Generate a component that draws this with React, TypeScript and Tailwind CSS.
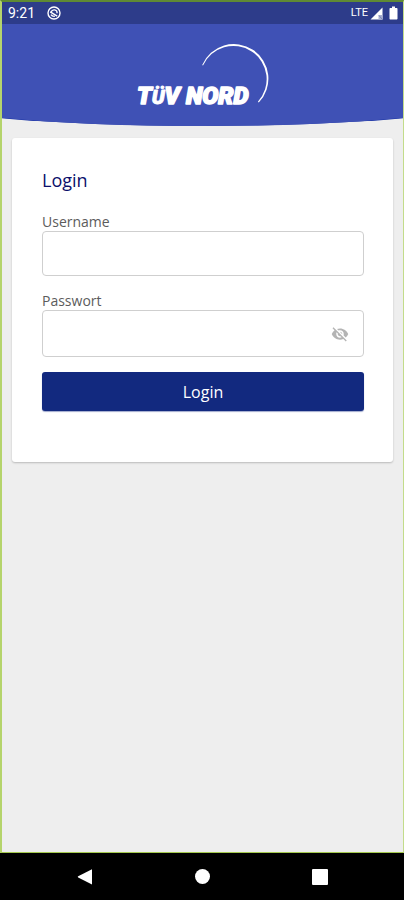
import React, { useState } from 'react';

function DoNotDisturbIcon() {
  return (
    <svg viewBox="0 0 14 14" className="h-[14px] w-[14px]" fill="none" stroke="currentColor" aria-hidden="true">
      <circle cx="7" cy="7" r="6" strokeWidth="1.4" />
      <path d="M4 6.200C4.600 4.500 6 3.700 7.600 3.900 9.200 4.100 10.200 5.500 10.100 7.200" strokeWidth="1.300" />
      <path d="M3.200 5.800L10.200 10.200M4 8.600C4.900 10 6.300 10.500 7.800 10.300" strokeWidth="1.400" />
    </svg>
  );
}

function SignalIcon() {
  return (
    <svg viewBox="0 0 13 13" className="h-[13px] w-[13px]" aria-hidden="true">
      <path d="M12.500.5v12H.5z" fill="#ffffff" />
      <path d="M8.500 8h4v4.500h-4z" fill="#a9b0d0" />
      <path d="M9 8.500l3 3.500" stroke="#7882b5" strokeWidth="1" />
    </svg>
  );
}

function BatteryIcon() {
  return (
    <svg viewBox="0 0 9 14" className="h-[14px] w-[9px]" fill="currentColor" aria-hidden="true">
      <path d="M3 .5h3v1.500h1.500c.6 0 1 .4 1 1v9.500c0 .6-.4 1-1 1h-6c-.6 0-1-.4-1-1V3c0-.6.4-1 1-1H3z" />
    </svg>
  );
}

function Logo() {
  return (
    <svg viewBox="0 0 134 74" className="h-[74px] w-[134px] overflow-visible" role="img" aria-label="TÜV NORD">
      {/* swoosh, thickest towards the upper right */}
      <path
        d="M66.200 21A34.500 34.500 0 1 1 122.800 58.500L121.900 57.700A33.300 33.300 0 1 0 67 21.500Z"
        fill="#ffffff"
      />
      <text
        x="1"
        y="60"
        fill="#ffffff"
        stroke="#ffffff"
        strokeWidth="1.6"
        strokeLinejoin="round"
        className="font-['Roboto'] text-[24px] font-black italic"
      >
        T<tspan className="text-[20px]" strokeWidth="0.9">Ü</tspan>V NORD
      </text>
    </svg>
  );
}

function EyeOffIcon() {
  return (
    <svg viewBox="0 0 24 24" className="h-[18px] w-[18px]" fill="currentColor" aria-hidden="true">
      <path d="M12 7c2.760 0 5 2.240 5 5 0 .65-.13 1.260-.36 1.830l2.920 2.920c1.510-1.260 2.700-2.890 3.430-4.750-1.730-4.390-6-7.500-11-7.500-1.400 0-2.740.25-3.980.7l2.160 2.160C10.740 7.130 11.350 7 12 7zM2 4.270l2.280 2.280.46.46C3.080 8.300 1.780 10.020 1 12c1.730 4.390 6 7.500 11 7.500 1.550 0 3.030-.3 4.380-.84l.42.42L19.730 22 21 20.730 3.270 3 2 4.270zM7.530 9.800l1.550 1.550c-.05.21-.08.43-.08.65 0 1.660 1.340 3 3 3 .22 0 .44-.03.65-.08l1.550 1.550c-.67.33-1.410.53-2.200.53-2.760 0-5-2.240-5-5 0-.79.2-1.530.53-2.200zm4.310-.78l3.150 3.150.02-.16c0-1.660-1.340-3-3-3l-.17.01z" />
    </svg>
  );
}

export default function App() {
  const [username, setUsername] = useState('');
  const [password, setPassword] = useState('');
  const [showPassword, setShowPassword] = useState(false);

  return (
    <div className="flex min-h-screen flex-col bg-black font-['Open_Sans',sans-serif]">
      <div className="flex flex-1 flex-col border-b border-l-2 border-r border-t-2 border-b-[#a5c94f] border-l-[#b5d46c] border-r-[#c3dc8a] border-t-[#5f8a34] bg-[#eeeeee]">
        {/* Status bar */}
        <div className="flex h-[22px] items-center bg-[#2d3c8a] pl-1.5 pr-[5px] font-['Roboto'] text-white">
          <span className="text-[14px] leading-5">9:21</span>
          <span className="ml-3">
            <DoNotDisturbIcon />
          </span>
          <div className="ml-auto flex items-center">
            <span className="text-[11px] leading-5">LTE</span>
            <span className="ml-0.5">
              <SignalIcon />
            </span>
            <span className="ml-1.5">
              <BatteryIcon />
            </span>
          </div>
        </div>

        {/* Curved header */}
        <header className="relative flex h-[102px] justify-center overflow-hidden pt-5">
          <div className="absolute inset-y-0 -left-[20%] w-[140%] rounded-b-[50%_26px] bg-[#1a34a5]" />
          <div className="absolute inset-y-0 -left-[20%] w-[140%] rounded-b-[50%_27px] bg-[#3f51b5]" />
          <div className="relative">
            <Logo />
          </div>
        </header>

        <main className="px-2.5 pt-3">
          <form
            className="rounded-[3px] bg-white pb-[51px] pl-[30px] pr-[29px] pt-[30px] shadow-[0_1px_2px_rgba(0,0,0,0.22)]"
            onSubmit={(e) => e.preventDefault()}
          >
            <h1 className="text-[18px] leading-6 text-[#0b0f6b]">Login</h1>

            <label htmlFor="username" className="mt-5 block text-[14px] leading-[19px] text-[#5c5c5c]">
              Username
            </label>
            <input
              id="username"
              type="text"
              value={username}
              onChange={(e) => setUsername(e.target.value)}
              className="block h-[45px] w-full rounded-[4px] border border-[#cfcfcf] bg-white px-3 text-[16px] outline-none"
            />

            <label htmlFor="password" className="mt-[15px] block text-[14px] leading-[19px] text-[#5c5c5c]">
              Passwort
            </label>
            <div className="flex h-[47px] items-center rounded-[4px] border border-[#cfcfcf] bg-white pr-3.5">
              <input
                id="password"
                type={showPassword ? 'text' : 'password'}
                value={password}
                onChange={(e) => setPassword(e.target.value)}
                className="h-full min-w-0 flex-1 px-3 text-[16px] outline-none"
              />
              <button
                type="button"
                aria-label="Passwort anzeigen"
                onClick={() => setShowPassword(!showPassword)}
                className="text-[#b4b4b4]"
              >
                <EyeOffIcon />
              </button>
            </div>

            <button
              type="submit"
              className="mt-[15px] block h-[39px] w-full rounded-[3px] bg-[#12297f] text-center text-[16px] text-white shadow-[0_1px_1px_rgba(18,41,127,0.4)]"
            >
              Login
            </button>
          </form>
        </main>
      </div>

      {/* Android navigation bar */}
      <nav className="grid h-[47px] grid-cols-[1fr_auto_1fr] items-center bg-black text-white">
        <button type="button" aria-label="Back" className="mr-[102px] justify-self-end">
          <svg viewBox="0 0 16 18" className="h-[18px] w-[16px]" fill="currentColor" aria-hidden="true">
            <path d="M15 1.200v15.200L1.200 9.400a.7.7 0 0 1 0-1.200z" />
          </svg>
        </button>
        <button type="button" aria-label="Home" className="block h-[15px] w-[15px] rounded-full bg-white" />
        <button type="button" aria-label="Recent apps" className="ml-[102px] block h-4 w-4 rounded-[1px] bg-white" />
      </nav>
    </div>
  );
}
